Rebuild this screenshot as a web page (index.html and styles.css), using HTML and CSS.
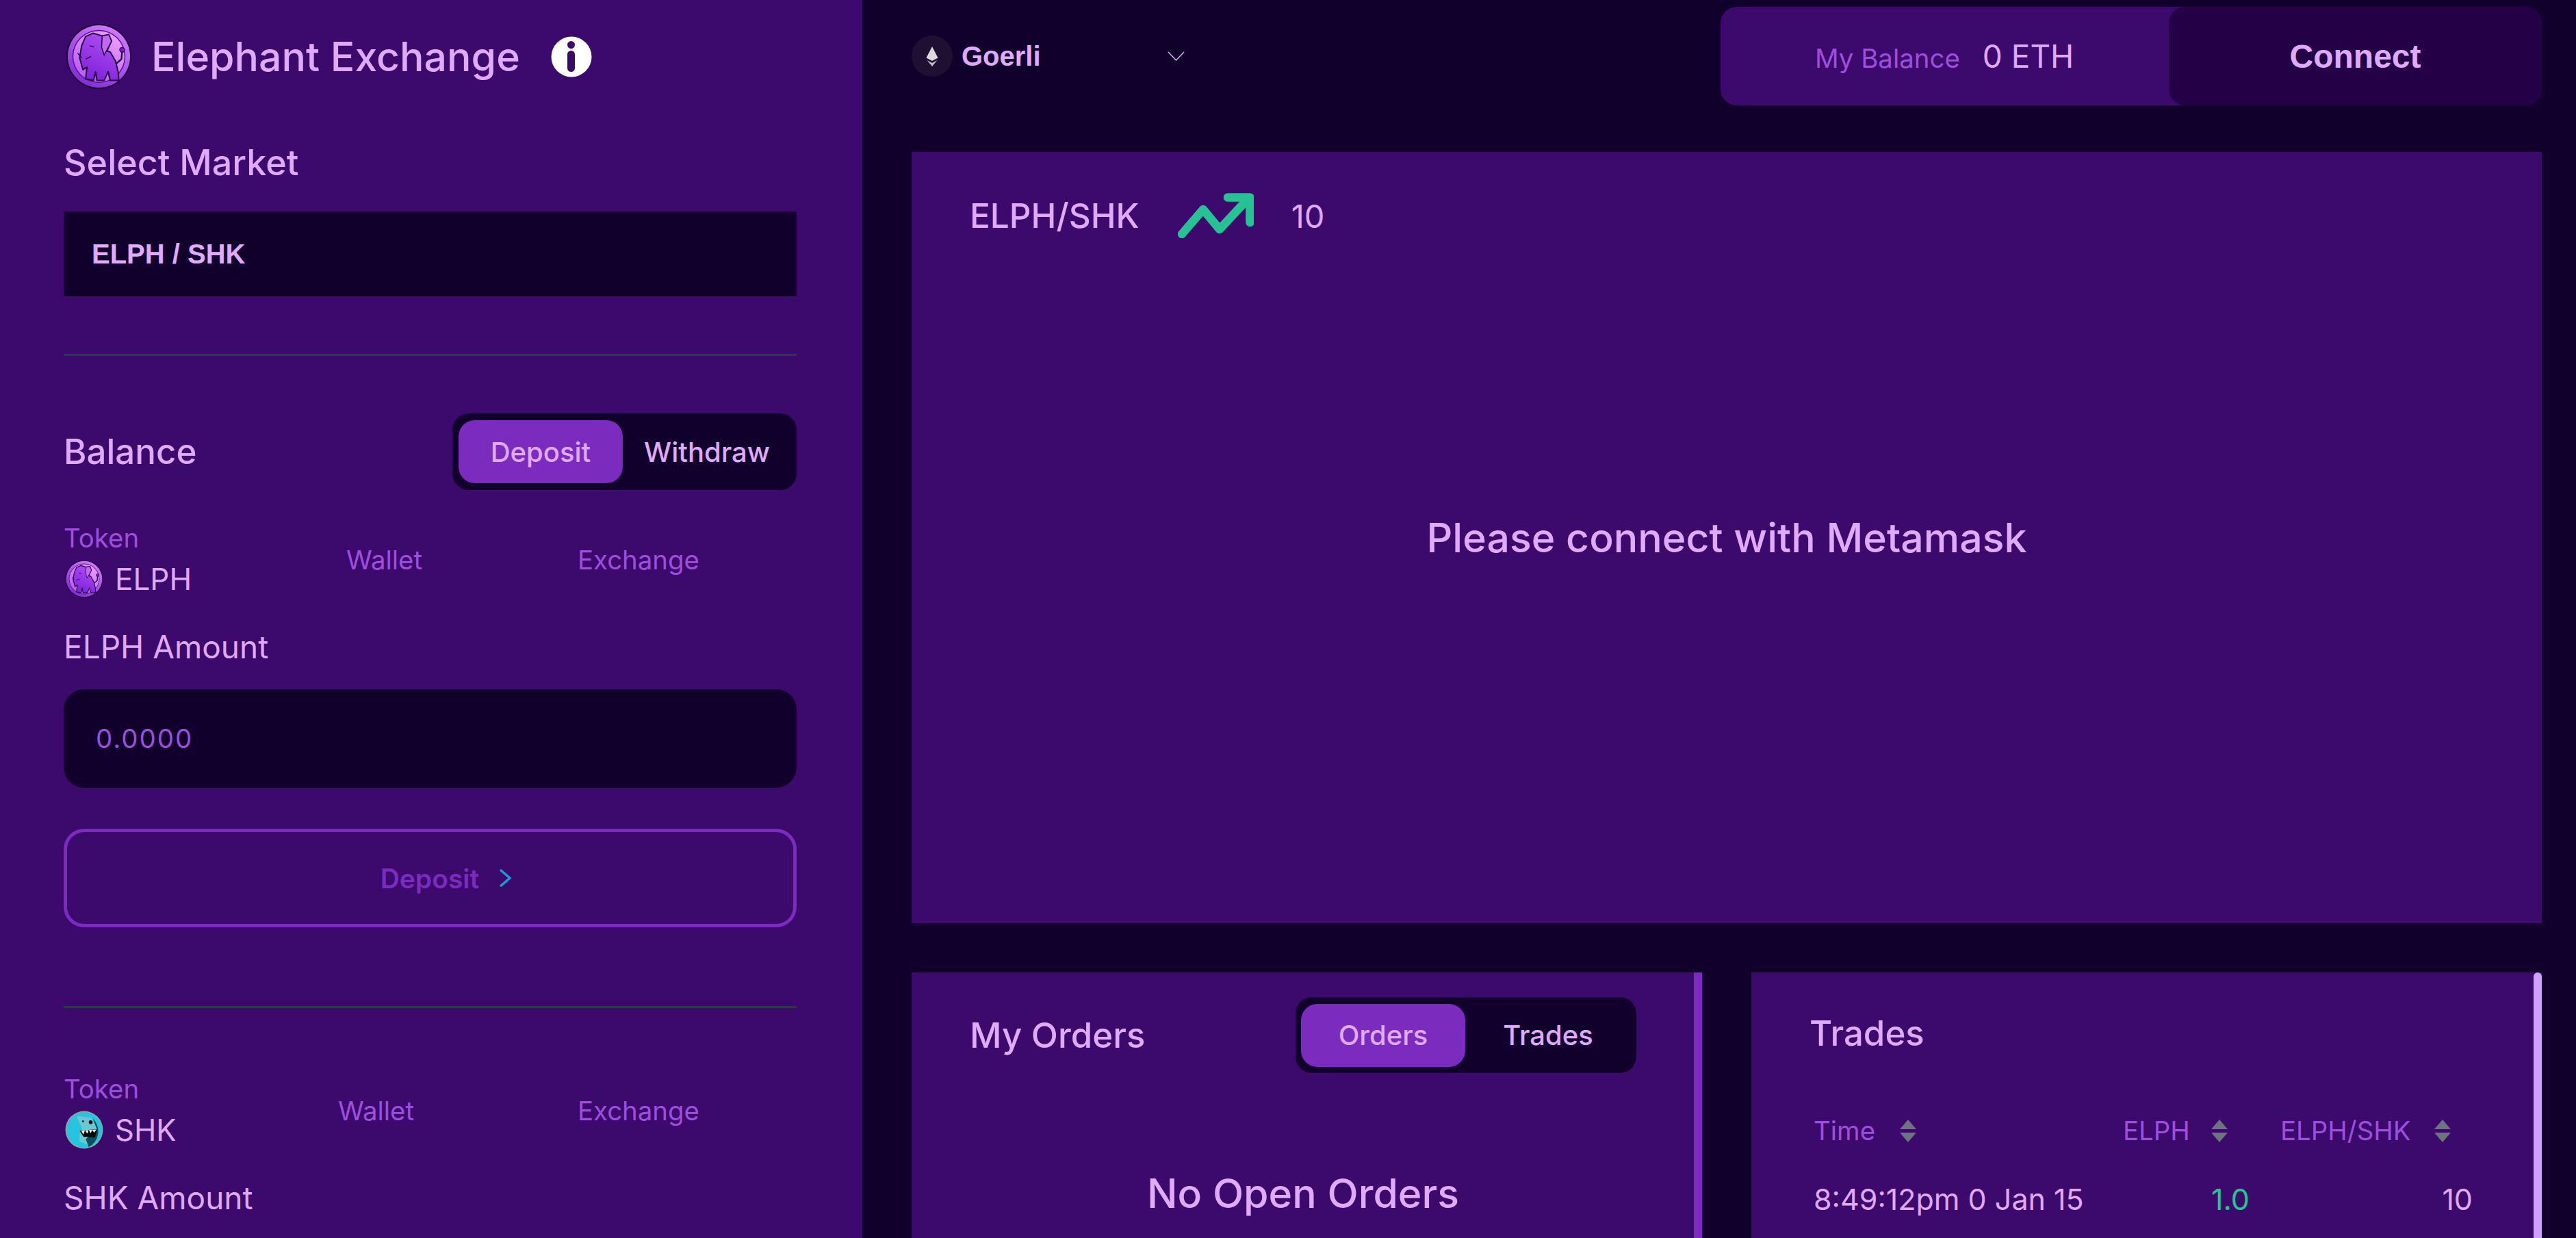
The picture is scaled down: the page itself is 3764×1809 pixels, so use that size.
FILE: index.html
```html
<!DOCTYPE html>
<html lang="en">
<head>
  <meta charset="UTF-8">
  <title>Elephant Exchange</title>
  <link rel="stylesheet" href="styles.css">
</head>
<body>
  <svg class="defs" aria-hidden="true">
    <defs>
      <linearGradient id="coinRim" x1="0.8" y1="0" x2="0.2" y2="1">
        <stop offset="0" stop-color="#d67cff"/>
        <stop offset="1" stop-color="#7c2ad0"/>
      </linearGradient>
      <linearGradient id="coinFace" x1="0.8" y1="0" x2="0.2" y2="1">
        <stop offset="0" stop-color="#f09eff"/>
        <stop offset="1" stop-color="#b655f2"/>
      </linearGradient>
      <linearGradient id="elphBody" x1="0.7" y1="0" x2="0.3" y2="1">
        <stop offset="0" stop-color="#b04cf5"/>
        <stop offset="1" stop-color="#7e22d8"/>
      </linearGradient>
      <symbol id="elphCoin" viewBox="0 0 100 100">
        <circle cx="50" cy="50" r="49" fill="#1d0638"/>
        <circle cx="50" cy="50" r="47" fill="url(#coinRim)"/>
        <circle cx="50" cy="50" r="40" fill="#4d1390"/>
        <circle cx="50" cy="50" r="38.500" fill="url(#coinFace)"/>
        <path d="M76 61 84 54 85 41" fill="none" stroke="#1d0638" stroke-width="2.500"/>
        <circle cx="85" cy="40" r="3.500" fill="#7a1fd0" stroke="#1d0638" stroke-width="1.500"/>
        <path d="M30 20 41 15 55 19 65 17 69 27 62 42 67 43 75 57 79 73 80 86 67 86 64 73 58 86 47 86 45 73 42 86 30 84 32 66 26 70 21 52 24 34Z" fill="url(#elphBody)" stroke="#1d0638" stroke-width="2" stroke-linejoin="round"/>
        <path d="M55 19 65 17 69 27 58 48 54 36Z" fill="#c268f5" stroke="#1d0638" stroke-width="1.500"/>
        <path d="M36 34 43 36M24 52 18 45M30 54 38 50" fill="none" stroke="#1d0638" stroke-width="1.500"/>
      </symbol>
      <symbol id="shkCoin" viewBox="0 0 100 100">
        <circle cx="50" cy="50" r="49" fill="#a2a2a0"/>
        <circle cx="50" cy="50" r="46.500" fill="#26c4de"/>
        <path d="M30 14 66 18 80 30 84 50 62 90 38 80 38 60 46 50Z" fill="#6cc7d2"/>
        <path d="M72 20A46.500 46.500 0 0 1 62 95L54 74 84 50Z" fill="#0b4f60"/>
        <path d="M38 52 84 48 78 70 48 68Z" fill="#0a0a0a"/>
        <path d="M42 52 48 62 52 51 58 60 62 50 67 59 71 50 76 57 82 49Z" fill="#fff"/>
        <circle cx="47" cy="28" r="2.500" fill="#0a0a0a"/>
        <circle cx="67" cy="30" r="5" fill="#0a0a0a"/>
      </symbol>
      <symbol id="sortArrows" viewBox="0 0 24 33">
        <path d="M12 0 24 14H0ZM0 19H24L12 33Z" fill="#6c757d"/>
      </symbol>
    </defs>
  </svg>

  <aside class="sidebar">
    <div class="brand">
      <svg class="brand-logo"><use href="#elphCoin"/></svg>
      <span class="brand-name">Elephant Exchange</span>
      <svg class="brand-info" viewBox="0 0 60 60">
        <circle cx="30" cy="30" r="29.500" fill="#fff"/>
        <circle cx="29.500" cy="12.500" r="5.500" fill="#3c096c"/>
        <rect x="24" y="21" width="11" height="31" rx="5.500" fill="#3c096c"/>
      </svg>
    </div>

    <h2 class="heading market-label">Select Market</h2>
    <select class="market-select">
      <option>ELPH / SHK</option>
    </select>
    <hr class="divider market-divider">

    <div class="panel-head balance-head">
      <h2 class="heading">Balance</h2>
      <div class="toggle">
        <button class="toggle-btn toggle-btn-on deposit-tab">Deposit</button>
        <button class="toggle-btn withdraw-tab">Withdraw</button>
      </div>
    </div>

    <div class="token-row token-row-elph">
      <div class="token-cell">
        <div class="small-label">Token</div>
        <div class="token-name"><svg class="token-icon"><use href="#elphCoin"/></svg>ELPH</div>
      </div>
      <div class="small-label">Wallet</div>
      <div class="small-label">Exchange</div>
    </div>

    <div class="amount-label">ELPH Amount</div>
    <input class="amount-input" type="text" placeholder="0.0000">
    <button class="deposit-btn">Deposit
      <svg class="deposit-arrow" viewBox="0 0 18 26"><path d="M2 1 16 13 2 25" fill="none" stroke="#1c9ad6" stroke-width="3.500"/></svg>
    </button>
    <hr class="divider balance-divider">

    <div class="token-row token-row-shk">
      <div class="token-cell">
        <div class="small-label">Token</div>
        <div class="token-name token-name-shk"><svg class="token-icon"><use href="#shkCoin"/></svg>SHK</div>
      </div>
      <div class="small-label">Wallet</div>
      <div class="small-label">Exchange</div>
    </div>
    <div class="amount-label">SHK Amount</div>
  </aside>

  <main class="main">
    <header class="topbar">
      <div class="network">
        <span class="network-icon">
          <svg class="eth-icon" viewBox="0 0 18 29">
            <path d="M9 0 17.500 16.500 9 21 .5 16.500Z" fill="#dddadf"/>
            <path d="M1.500 20 9 24 16.500 20 9 29Z" fill="#c4c0c8"/>
          </svg>
        </span>
        <span class="network-name">Goerli</span>
        <svg class="network-arrow" viewBox="0 0 25 14"><path d="M1 1 12.500 13 24 1" fill="none" stroke="#e0aaff" stroke-width="1.500"/></svg>
      </div>
      <div class="account">
        <div class="account-balance">
          <span class="account-label">My Balance</span>
          <span class="account-value">0 ETH</span>
        </div>
        <button class="connect-btn">Connect</button>
      </div>
    </header>

    <section class="chart">
      <div class="chart-head">
        <span class="heading chart-title">ELPH/SHK</span>
        <svg class="trend-icon" viewBox="0 0 111 66">
          <path d="M6 60 37 24 61 53 103 8M73 6.500H105.500V43" fill="none" stroke="#27c195" stroke-width="12.500" stroke-linecap="round" stroke-linejoin="round"/>
        </svg>
        <span class="chart-price">10</span>
      </div>
      <div class="chart-msg">Please connect with Metamask</div>
    </section>

    <div class="lower">
      <section class="card">
        <div class="card-body">
          <div class="panel-head orders-head">
            <h2 class="heading">My Orders</h2>
            <div class="toggle toggle-orders">
              <button class="toggle-btn toggle-btn-on orders-tab">Orders</button>
              <button class="toggle-btn trades-tab">Trades</button>
            </div>
          </div>
          <div class="empty-msg">No Open Orders</div>
        </div>
        <div class="scroll-thumb"></div>
      </section>

      <section class="card">
        <div class="card-body">
          <h2 class="heading trades-title">Trades</h2>
          <div class="trades-table">
            <div class="th th-time">Time<svg class="sort-icon"><use href="#sortArrows"/></svg></div>
            <div class="th th-amount">ELPH<svg class="sort-icon"><use href="#sortArrows"/></svg></div>
            <div class="th">ELPH/SHK<svg class="sort-icon"><use href="#sortArrows"/></svg></div>
            <div class="td">8:49:12pm 0 Jan 15</div>
            <div class="td td-num td-up">1.0</div>
            <div class="td td-num">10</div>
          </div>
        </div>
        <div class="scroll-thumb scroll-thumb-light"></div>
      </section>
    </div>
  </main>
</body>
</html>
```

FILE: styles.css
```css
* {
  box-sizing: border-box;
  margin: 0;
  padding: 0;
}

body {
  display: flex;
  height: 100vh;
  overflow: hidden;
  background-color: #10002b;
  color: #e0aaff;
  font-family: "Inter", "Noto Sans", sans-serif;
  font-size: 38.4px;
}

.defs {
  position: absolute;
  width: 0;
  height: 0;
}

button {
  border: none;
  background: none;
  color: inherit;
  font: inherit;
}

.heading {
  font-size: 51px;
  font-weight: 500;
  line-height: 60px;
}

/* sidebar */
.sidebar {
  flex: 0 0 1260px;
  height: 100%;
  overflow: hidden;
  padding: 34px 96px 0 93px;
  background-color: #3c096c;
}

.brand {
  display: flex;
  align-items: center;
  height: 97px;
  padding-left: 3px;
}

.brand-logo {
  width: 97px;
  height: 97px;
}

.brand-name {
  margin-left: 28px;
  font-size: 59px;
  font-weight: 500;
}

.brand-info {
  width: 60px;
  height: 60px;
  margin-left: 45px;
}

.market-label {
  margin-top: 77px;
  font-size: 52px;
}

.market-select {
  display: block;
  width: 100%;
  height: 124px;
  margin-top: 41px;
  padding-left: 41px;
  border: none;
  border-radius: 0;
  appearance: none;
  background-color: #10002b;
  color: #e0aaff;
  font-family: "Liberation Sans", Arial, sans-serif;
  font-size: 40px;
  font-weight: 700;
}

.divider {
  height: 3px;
  border: none;
  background-color: #2d3748;
}

.market-divider {
  margin-top: 84px;
}

.panel-head {
  display: flex;
  align-items: center;
  justify-content: space-between;
}

.balance-head {
  margin-top: 84px;
}

.toggle {
  display: flex;
  align-items: center;
  width: 503px;
  height: 112px;
  padding-left: 9px;
  border-radius: 24px;
  background-color: #10002b;
}

.toggle-btn {
  height: 92px;
  border-radius: 24px;
  font-size: 40px;
  font-weight: 500;
  text-align: center;
}

.toggle-btn-on {
  background-color: #7b2cbf;
}

.deposit-tab {
  width: 240px;
}

.withdraw-tab {
  width: 246px;
}

.token-row {
  display: grid;
  align-items: center;
  height: 115px;
}

.token-row-elph {
  margin-top: 44px;
  grid-template-columns: 413px 338px 1fr;
}

.token-row-shk {
  margin-top: 92px;
  grid-template-columns: 401px 350px 1fr;
}

.token-cell {
  align-self: start;
  padding-top: 3px;
}

.small-label {
  color: #9d4edd;
  line-height: 46px;
}

.token-name {
  display: flex;
  align-items: center;
  height: 60px;
  margin-top: 7px;
  font-size: 44px;
}

.token-name-shk {
  font-size: 43.500px;
}

.token-icon {
  width: 56px;
  height: 56px;
  margin: 0 17px 0 2px;
}

.amount-label {
  margin-top: 40px;
  font-size: 46px;
  line-height: 60px;
}

.amount-input {
  display: block;
  width: 100%;
  height: 144px;
  margin-top: 32px;
  padding-left: 47px;
  border: none;
  border-radius: 30px;
  background-color: #10002b;
  color: #e0aaff;
  font: inherit;
  letter-spacing: 2px;
}

.amount-input::placeholder {
  color: #9d4edd;
  opacity: 1;
}

.deposit-btn {
  display: flex;
  align-items: center;
  justify-content: center;
  width: 100%;
  height: 144px;
  margin-top: 60px;
  padding-left: 46px;
  border: 5px solid #7b2cbf;
  border-radius: 30px;
  color: #7b2cbf;
  font-size: 39px;
  font-weight: 600;
}

.deposit-arrow {
  width: 18px;
  height: 26px;
  margin-left: 29px;
}

.balance-divider {
  margin-top: 115px;
}

/* main column */
.main {
  flex: 1;
  padding: 10px 50px 0 72px;
}

.topbar {
  display: flex;
  align-items: center;
  justify-content: space-between;
  height: 144px;
}

.network {
  display: flex;
  align-items: center;
}

.network-icon {
  display: flex;
  align-items: center;
  justify-content: center;
  width: 60px;
  height: 60px;
  border-radius: 50%;
  background-color: #1f1033;
}

.eth-icon {
  width: 18px;
  height: 29px;
}

.network-name {
  width: 301px;
  margin-left: 13px;
  font-family: "Liberation Sans", Arial, sans-serif;
  font-size: 40px;
  font-weight: 700;
}

.network-arrow {
  width: 25px;
  height: 14px;
}

.account {
  display: flex;
  width: 1200px;
  height: 144px;
  border-radius: 24px;
  background-color: #3c096c;
}

.account-balance {
  display: flex;
  flex: 1;
  align-items: baseline;
  padding: 44px 0 0 138px;
}

.account-label {
  color: #9d4edd;
}

.account-value {
  margin-left: 33px;
  font-size: 46px;
}

.connect-btn {
  width: 545px;
  border-radius: 24px;
  background-color: #240046;
  font-family: "Liberation Sans", Arial, sans-serif;
  font-size: 48px;
  font-weight: 700;
}

.chart {
  display: flex;
  flex-direction: column;
  height: 1127px;
  margin-top: 68px;
  padding: 60px 85px 127px;
  background-color: #3c096c;
}

.chart-head {
  display: flex;
  align-items: center;
  height: 66px;
}

.chart-title {
  font-size: 49.500px;
}

.trend-icon {
  width: 111px;
  height: 66px;
  margin: 0 55px 0 56px;
}

.chart-price {
  font-size: 47px;
}

.chart-msg {
  display: flex;
  flex: 1;
  align-items: center;
  justify-content: center;
  font-size: 59px;
  font-weight: 500;
}

.lower {
  display: grid;
  grid-template-columns: 1155px 1155px;
  gap: 72px;
  margin-top: 72px;
}

.card {
  display: flex;
  height: 388px;
  background-color: #3c096c;
}

.card-body {
  flex: 1;
  padding: 36px 84px 0 85px;
}

.scroll-thumb {
  flex: 0 0 12px;
  background-color: #7b2cbf;
}

.scroll-thumb-light {
  border-radius: 6px 6px 0 0;
  background-color: #d09fff;
}

.toggle-orders {
  width: 498px;
  height: 111px;
  padding-left: 8px;
}

.orders-tab {
  width: 240px;
}

.trades-tab {
  width: 242px;
}

.empty-msg {
  margin-top: 141px;
  font-size: 59px;
  font-weight: 500;
  line-height: 70px;
  text-align: center;
}

.trades-title {
  margin-top: 23px;
}

.trades-table {
  display: grid;
  grid-template-columns: 407px 185px 281px;
  column-gap: 45px;
  margin: 92px 0 0 6px;
}

.th {
  display: flex;
  align-items: center;
  height: 40px;
  color: #9d4edd;
}

.sort-icon {
  width: 24px;
  height: 33px;
  margin-left: 34px;
}

.th-time .sort-icon {
  margin-left: 36px;
}

.th-amount .sort-icon {
  margin-left: 31px;
}

.td {
  height: 50px;
  margin-top: 55px;
  font-size: 43px;
  line-height: 50px;
  white-space: nowrap;
}

.td-num {
  text-align: right;
}

.td-up {
  color: #25c78f;
}
```
